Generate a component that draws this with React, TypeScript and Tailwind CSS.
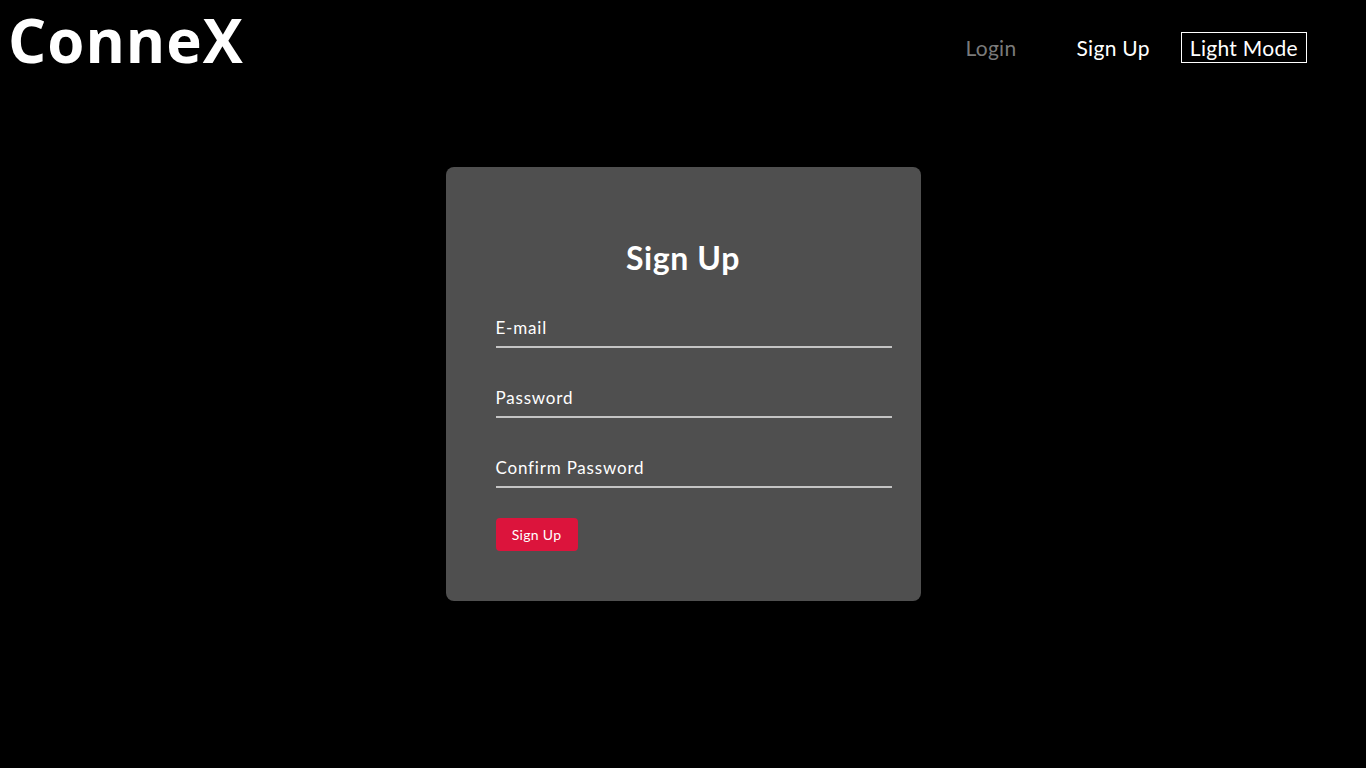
export default function App() {
  return (
    <div className="min-h-screen bg-black text-white font-['Lato','Open_Sans',sans-serif]">
      {/* Header */}
      <header className="flex items-start justify-between pl-2 pr-[59px]">
        <h1 className="font-['Open_Sans',sans-serif] text-[60px] font-bold leading-[80px] tracking-[1px]">ConneX</h1>
        <nav className="flex items-center pt-[32px] text-[21px] tracking-[0.3px]">
          <a href="#" className="leading-[31px] text-[#7a7a7a]">Login</a>
          <a href="#" className="ml-[60px] leading-[31px]">Sign Up</a>
          <button className="ml-[31px] border border-white px-[8px] leading-[29px] tracking-[0.3px]">Light Mode</button>
        </nav>
      </header>

      {/* Form card */}
      <main className="flex justify-center pt-[87px]">
        <div className="w-[475px] rounded-lg bg-[#4f4f4f] pl-[50px] pt-[72px] pb-[50px]">
          <h2 className="-ml-[50px] text-center text-[32px] font-bold leading-[38px] tracking-[0.6px]">Sign Up</h2>
          <form className="mt-[33px] flex w-[396px] flex-col gap-[32px]">
            <Field label="E-mail" />
            <Field label="Password" />
            <Field label="Confirm Password" />
            <div className="-mt-[2px]">
              <button type="button" className="h-[33px] w-[82px] rounded bg-[#dc143c] text-[14px] tracking-[0.3px]">Sign Up</button>
            </div>
          </form>
        </div>
      </main>
    </div>
  )
}

function Field({ label }: { label: string }) {
  return (
    <label className="block border-b-2 border-[#c4c4c4]">
      <span className="block text-[17px] leading-[36px] tracking-[0.8px]">{label}</span>
    </label>
  )
}
